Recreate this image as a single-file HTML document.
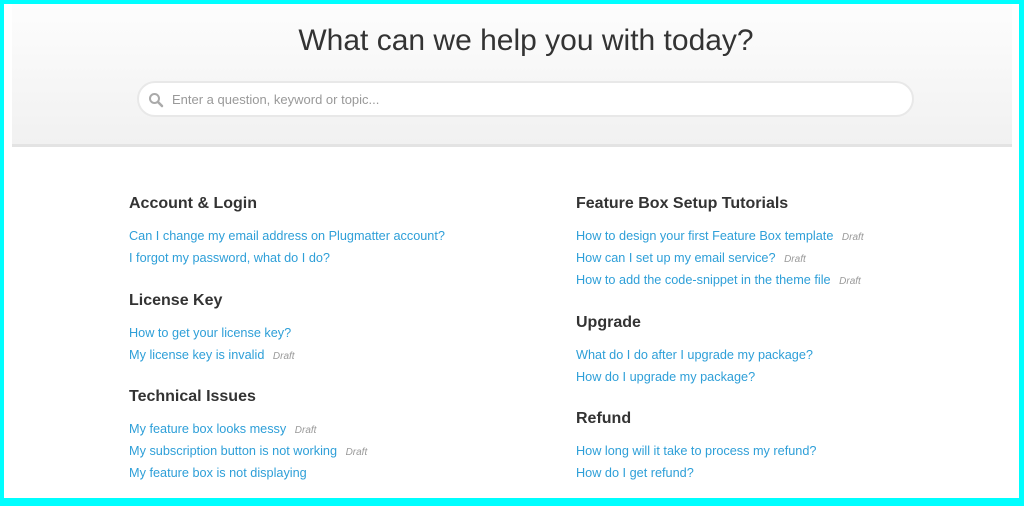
<!DOCTYPE html>
<html><head><meta charset="utf-8"><style>
html,body{margin:0;padding:0}
body{width:1024px;height:503px;background:#0ff;position:relative;overflow:hidden;font-family:"Liberation Sans",Arial,sans-serif}
.inner{position:absolute;left:4px;top:4px;width:1015px;height:494px;background:#fff}
.hdr{position:absolute;left:8px;top:0;width:1000px;height:140px;background:linear-gradient(#fdfdfd,#f1f1f1);border-bottom:3px solid #e3e3e3}
h1{position:absolute;left:14px;width:1000px;top:20px;margin:0;text-align:center;font-weight:normal;font-size:30px;color:#333}
.search{position:absolute;left:125px;top:77px;width:773px;height:32px;background:#fff;border:2px solid #e8e8e8;border-radius:18px}
.search svg{position:absolute;left:9px;top:9px}
.search span{position:absolute;left:33px;top:9px;font-size:13px;color:#999}
.col{position:absolute;top:190px}
h2{margin:0;font-size:16px;font-weight:bold;color:#333;height:22px;line-height:19px}
.sec{margin-bottom:21.5px}
.sec h2{margin-bottom:9px}
a{display:block;color:#2e9fd8;text-decoration:none;font-size:12.7px;line-height:22px;height:22px}
i{color:#999;font-size:10px;margin-left:5px}
</style></head><body>
<div class="inner">
<div class="hdr">
<h1>What can we help you with today?</h1>
<div class="search"><svg width="16" height="16" viewBox="0 0 16 16"><circle cx="6.5" cy="6.5" r="4.5" fill="none" stroke="#aaa" stroke-width="2"/><line x1="10" y1="10" x2="14" y2="14" stroke="#aaa" stroke-width="2.5" stroke-linecap="round"/></svg><span>Enter a question, keyword or topic...</span></div>
</div>
<div class="col" style="left:125px">
<div class="sec"><h2>Account &amp; Login</h2>
<a>Can I change my email address on Plugmatter account?</a>
<a>I forgot my password, what do I do?</a></div>
<div class="sec"><h2>License Key</h2>
<a>How to get your license key?</a>
<a>My license key is invalid <i>Draft</i></a></div>
<div class="sec"><h2>Technical Issues</h2>
<a>My feature box looks messy <i>Draft</i></a>
<a>My subscription button is not working <i>Draft</i></a>
<a>My feature box is not displaying</a></div>
</div>
<div class="col" style="left:572px">
<div class="sec"><h2>Feature Box Setup Tutorials</h2>
<a>How to design your first Feature Box template <i>Draft</i></a>
<a>How can I set up my email service? <i>Draft</i></a>
<a>How to add the code-snippet in the theme file <i>Draft</i></a></div>
<div class="sec"><h2>Upgrade</h2>
<a>What do I do after I upgrade my package?</a>
<a>How do I upgrade my package?</a></div>
<div class="sec"><h2>Refund</h2>
<a>How long will it take to process my refund?</a>
<a>How do I get refund?</a></div>
</div>
</div>
</body></html>
